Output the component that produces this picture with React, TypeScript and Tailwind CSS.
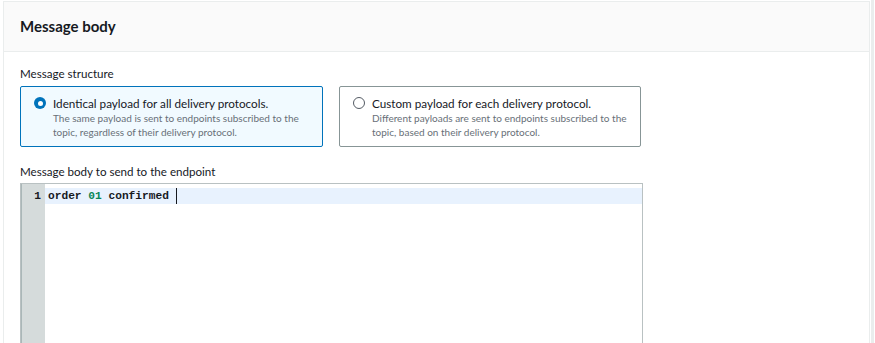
import React from "react";

const sans = { fontFamily: "Lato, 'Liberation Sans', Arial, sans-serif" };
const mono = { fontFamily: "'Liberation Mono', 'Courier New', monospace" };

function Radio({ checked }: { checked: boolean }) {
  return checked ? (
    <span className="mt-[2px] flex h-[12px] w-[12px] shrink-0 items-center justify-center rounded-full bg-[#0073bb]">
      <span className="h-[5px] w-[5px] rounded-full bg-white" />
    </span>
  ) : (
    <span className="mt-[2px] block h-[12px] w-[12px] shrink-0 rounded-full border border-[#545b64] bg-white" />
  );
}

function Card({
  checked,
  title,
  lines,
}: {
  checked: boolean;
  title: string;
  lines: string[];
}) {
  return (
    <div
      className={
        "flex h-[61px] items-start gap-[7px] rounded-[2px] border pl-[13px] pt-[8px] " +
        (checked ? "w-[303px] border-[#0073bb] bg-[#f1faff]" : "w-[302px] border-[#879596] bg-white")
      }
    >
      <Radio checked={checked} />
      <div className="flex flex-col">
        <div className="text-[11.7px] leading-[16px] text-[#16191f]">{title}</div>
        <div className="text-[10px] leading-[14px] text-[#687078]">
          {lines.map((l) => (
            <div key={l}>{l}</div>
          ))}
        </div>
      </div>
    </div>
  );
}

export default function App() {
  return (
    <div className="flex h-[343px] w-[875px] overflow-hidden bg-white" style={sans}>
      <div className="ml-[3px] mt-[1px] h-[400px] w-[867px] shrink-0 border border-[#eaeded]">
        <div className="flex h-[50px] items-center border-b border-[#eaeded] bg-[#fafafa] px-4">
          <h2 className="text-[15px] font-bold text-[#16191f]">Message body</h2>
        </div>
        <div className="px-4 pt-3">
          <div className="text-[11.6px] leading-[20px] text-[#16191f]">Message structure</div>
          <div className="mt-[2px] flex gap-4">
            <Card
              checked
              title="Identical payload for all delivery protocols."
              lines={[
                "The same payload is sent to endpoints subscribed to the",
                "topic, regardless of their delivery protocol.",
              ]}
            />
            <Card
              checked={false}
              title="Custom payload for each delivery protocol."
              lines={[
                "Different payloads are sent to endpoints subscribed to the",
                "topic, based on their delivery protocol.",
              ]}
            />
          </div>
          <div className="mt-[15px] text-[11.6px] leading-[20px] text-[#16191f]">
            Message body to send to the endpoint
          </div>
          <div className="mt-[1px] flex h-[200px] w-[623px] border border-[#b9c1c2] bg-white">
            <div className="w-[24px] shrink-0 border-l border-[#aab7b8] bg-[#d5dbdb] pt-[4px]">
              <div
                className="h-[16px] pr-[4px] text-right text-[11.2px] font-bold leading-[16px] text-[#16191f]"
                style={mono}
              >
                1
              </div>
            </div>
            <div className="flex-1 pt-[4px]">
              <div
                className="flex h-[16px] items-center bg-[#e8f2fe] pl-[3px] text-[11.2px] font-bold leading-[16px] text-[#16191f]"
                style={mono}
              >
                <span className="whitespace-pre">
                  order <span className="text-[#098658]">01</span> confirmed{" "}
                </span>
                <span className="h-[16px] w-[1px] bg-[#16191f]" />
              </div>
            </div>
          </div>
        </div>
      </div>
      <div className="ml-[1px] h-full w-[3px] bg-[#eaeded]" />
    </div>
  );
}
